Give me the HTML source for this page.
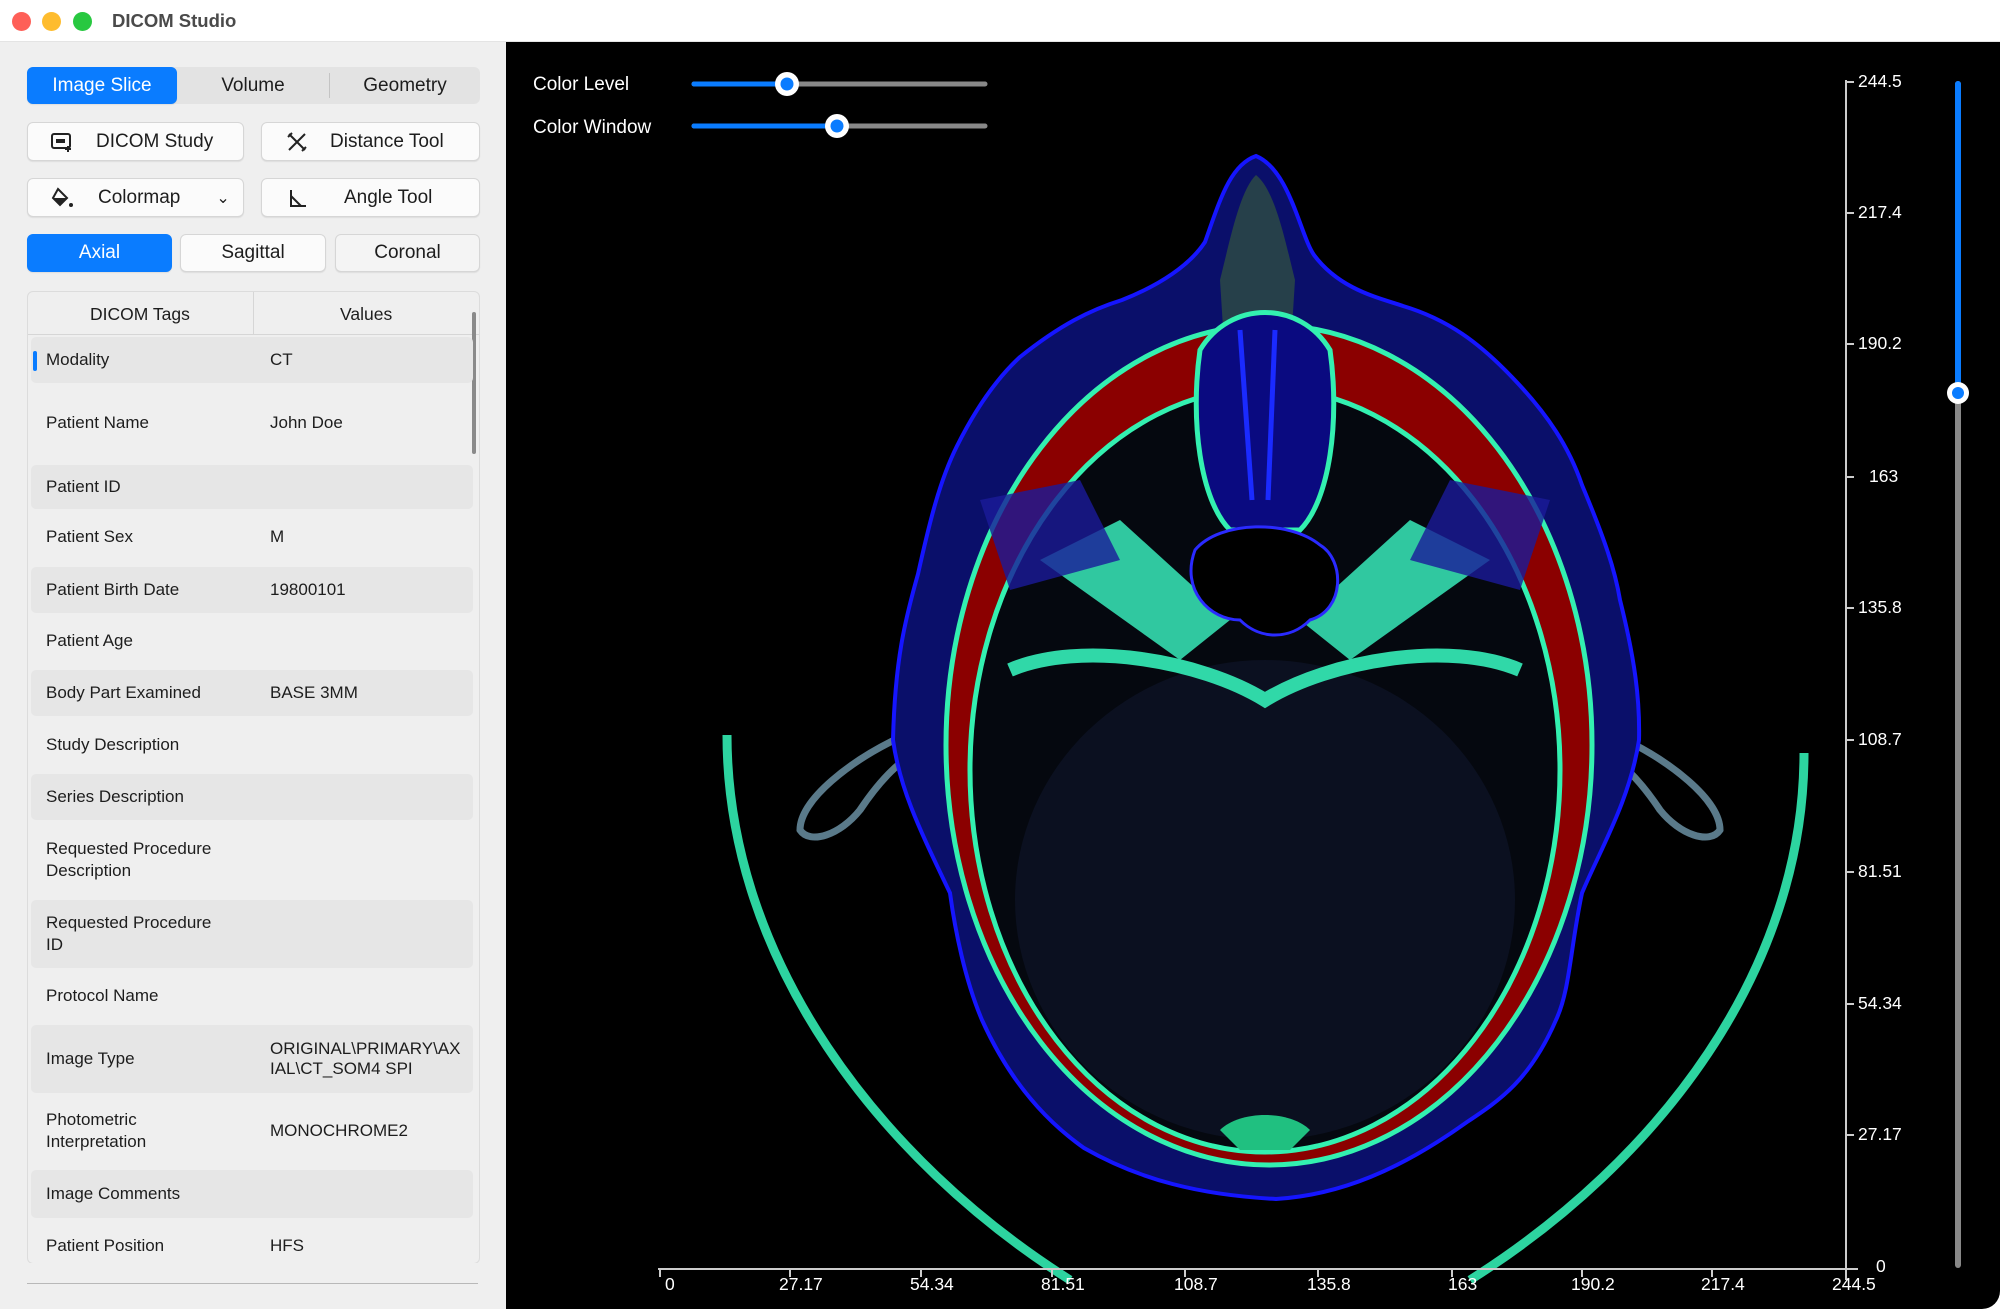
<!DOCTYPE html>
<html><head><meta charset="utf-8"><style>
*{margin:0;padding:0;box-sizing:border-box}
body{width:2000px;height:1309px;background:#fff;font-family:"Liberation Sans",sans-serif;position:relative;overflow:hidden;color:#1d1d1d}
.a{position:absolute}
.tb{left:0;top:0;width:2000px;height:42px;background:#fff;border-bottom:1px solid #e4e4e4}
.dot{width:19px;height:19px;border-radius:50%;top:12px}
.left{left:0;top:42px;width:506px;height:1267px;background:#efefef}
.btn{background:#fbfbfb;border:1px solid #d6d6d6;border-radius:6px;font-size:19px;display:flex;align-items:center;justify-content:center;box-shadow:0 1px 1px rgba(0,0,0,.08)}
.blue{background:#0a7cff;color:#fff;border-color:#0a7cff}
.row{left:31px;width:442px;font-size:17px;}
.row .k{position:absolute;left:15px;top:50%;transform:translateY(-50%);line-height:22px}
.row .v{position:absolute;left:239px;top:50%;transform:translateY(-50%);line-height:20px}
.st{background:#e6e6e6;border-radius:5px}
.black{left:506px;top:42px;width:1494px;height:1267px;background:#000;border-bottom-right-radius:18px}
.lab{color:#fff;font-size:19px}
.tk{color:#fff;font-size:17.5px;position:absolute}
</style></head><body>
<div class="a tb"></div>
<div class="a dot" style="left:12px;background:#fe5f57"></div>
<div class="a dot" style="left:42px;background:#febc2e"></div>
<div class="a dot" style="left:73px;background:#28c840"></div>
<div class="a" style="left:112px;top:10px;font-size:18.5px;font-weight:bold;color:#4a4a4a">DICOM Studio</div>

<div class="a left"></div>
<div class="a" style="left:27px;top:67px;width:453px;height:37px;background:#e3e3e3;border-radius:6px"></div>
<div class="a btn blue" style="left:27px;top:67px;width:150px;height:37px">Image Slice</div>
<div class="a" style="left:177px;top:67px;width:152px;height:37px;font-size:19px;display:flex;align-items:center;justify-content:center">Volume</div>
<div class="a" style="left:329px;top:73px;width:1px;height:25px;background:#c4c4c4"></div>
<div class="a" style="left:330px;top:67px;width:150px;height:37px;font-size:19px;display:flex;align-items:center;justify-content:center">Geometry</div>

<div class="a btn" style="left:27px;top:122px;width:217px;height:39px;justify-content:flex-start">
<svg style="margin-left:22px" width="24" height="20" viewBox="0 0 24 20"><rect x="2" y="2" width="18" height="14" rx="2" fill="none" stroke="#222" stroke-width="2"/><rect x="6" y="7" width="9" height="4" fill="#222"/><path d="M18 14v6M15 17h6" stroke="#222" stroke-width="2"/></svg><span style="margin-left:22px">DICOM Study</span></div>
<div class="a btn" style="left:261px;top:122px;width:219px;height:39px;justify-content:flex-start">
<svg style="margin-left:24px" width="22" height="22" viewBox="0 0 22 22"><path d="M3 3l16 16M19 3L3 19M6 2l-4 4M20 16l-4 4" stroke="#222" stroke-width="2" fill="none"/></svg><span style="margin-left:22px">Distance Tool</span></div>
<div class="a btn" style="left:27px;top:178px;width:217px;height:39px;justify-content:flex-start">
<svg style="margin-left:22px" width="24" height="22" viewBox="0 0 24 22"><path d="M8 2l9 9-7 7-7-7z" fill="none" stroke="#222" stroke-width="2"/><path d="M3 11h14l-7 7z" fill="#222"/><circle cx="21" cy="18" r="2" fill="#222"/></svg><span style="margin-left:24px">Colormap</span><span style="margin-left:36px;font-size:16px">&#8964;</span></div>
<div class="a btn" style="left:261px;top:178px;width:219px;height:39px;justify-content:flex-start">
<svg style="margin-left:26px" width="20" height="20" viewBox="0 0 20 20"><path d="M3 2v16h15M3 8l10 10" stroke="#222" stroke-width="2" fill="none"/></svg><span style="margin-left:36px">Angle Tool</span></div>
<div class="a btn blue" style="left:27px;top:234px;width:145px;height:38px">Axial</div>
<div class="a btn" style="left:180px;top:234px;width:146px;height:38px">Sagittal</div>
<div class="a btn" style="left:335px;top:234px;width:145px;height:38px;background:#f4f4f4">Coronal</div>

<div class="a" style="left:27px;top:291px;width:453px;height:973px;border:1px solid #dcdcdc;border-radius:6px;background:#efefef;overflow:hidden">
<div class="a" style="left:0;top:0;width:453px;height:43px;border-bottom:1px solid #d6d6d6;font-size:17.5px">
<span class="a" style="left:62px;top:12px">DICOM Tags</span><span class="a" style="left:225px;top:0;width:1px;height:43px;background:#d6d6d6"></span><span class="a" style="left:312px;top:12px">Values</span></div>
<div class="a" style="left:444px;top:20px;width:4px;height:142px;background:#8a8a8a;border-radius:2px"></div>
</div>
<div class="a row st" style="top:337px;height:46px"><span class="a" style="left:2px;top:14px;width:4px;height:20px;background:#0a7cff;border-radius:2px"></span><span class="k">Modality</span><span class="v">CT</span></div>
<div class="a row" style="top:383px;height:79px"><span class="k">Patient Name</span><span class="v">John Doe</span></div>
<div class="a row st" style="top:465px;height:44px"><span class="k">Patient ID</span></div>
<div class="a row" style="top:509px;height:56px"><span class="k">Patient Sex</span><span class="v">M</span></div>
<div class="a row st" style="top:567px;height:46px"><span class="k">Patient Birth Date</span><span class="v">19800101</span></div>
<div class="a row" style="top:614px;height:54px"><span class="k">Patient Age</span></div>
<div class="a row st" style="top:670px;height:46px"><span class="k">Body Part Examined</span><span class="v">BASE 3MM</span></div>
<div class="a row" style="top:717px;height:55px"><span class="k">Study Description</span></div>
<div class="a row st" style="top:774px;height:46px"><span class="k">Series Description</span></div>
<div class="a row" style="top:821px;height:77px"><span class="k">Requested Procedure<br>Description</span></div>
<div class="a row st" style="top:900px;height:68px"><span class="k">Requested Procedure<br>ID</span></div>
<div class="a row" style="top:969px;height:54px"><span class="k">Protocol Name</span></div>
<div class="a row st" style="top:1025px;height:68px"><span class="k">Image Type</span><span class="v">ORIGINAL\PRIMARY\AX<br>IAL\CT_SOM4 SPI</span></div>
<div class="a row" style="top:1094px;height:74px"><span class="k">Photometric<br>Interpretation</span><span class="v">MONOCHROME2</span></div>
<div class="a row st" style="top:1170px;height:48px"><span class="k">Image Comments</span></div>
<div class="a row" style="top:1219px;height:54px"><span class="k">Patient Position</span><span class="v">HFS</span></div>
<div class="a" style="left:27px;top:1263px;width:453px;height:2px;background:#efefef"></div>
<div class="a" style="left:27px;top:1283px;width:451px;height:1px;background:#b8b8b8"></div>

<div class="a black"></div>
<svg class="a" style="left:0;top:0" width="2000" height="1309" viewBox="0 0 2000 1309">
<defs><clipPath id="c"><rect x="506" y="42" width="1494" height="1267"/></clipPath></defs>
<g clip-path="url(#c)">
<path d="M727 735 C727 960 880 1160 1070 1280" fill="none" stroke="#2dd4a0" stroke-width="9"/>
<path d="M1804 753 C1804 970 1660 1160 1470 1280" fill="none" stroke="#2dd4a0" stroke-width="9"/>
<path d="M905 735 C850 760 800 800 800 830 C810 845 840 835 860 810 C880 780 900 760 920 750" fill="none" stroke="#5a7a8a" stroke-width="7"/>
<path d="M1615 735 C1670 760 1720 800 1720 830 C1710 845 1680 835 1660 810 C1640 780 1620 760 1600 750" fill="none" stroke="#5a7a8a" stroke-width="7"/>
<path d="M1256 156 C1290 170 1300 235 1314 255 C1340 290 1380 298 1403 306 C1450 320 1480 345 1505 370 C1550 415 1570 450 1582 485 C1605 540 1615 570 1620 600 C1635 660 1640 700 1639 740 C1630 800 1600 850 1582 893 C1570 950 1570 990 1556 1020 C1530 1080 1500 1100 1467 1122 C1400 1170 1340 1195 1276 1199 C1200 1195 1140 1180 1084 1148 C1030 1110 1000 1060 982 1020 C965 980 955 930 950 893 C920 830 900 790 893 740 C895 660 905 620 918 574 C930 520 940 480 957 446 C975 410 995 380 1020 357 C1060 325 1090 310 1122 300 C1160 285 1190 265 1205 242 C1220 200 1230 165 1256 156Z" fill="#0a0f6a" stroke="#1515ff" stroke-width="4"/>
<path d="M1256 175 C1275 190 1285 240 1295 280 L1290 360 L1225 360 L1220 280 C1230 240 1240 190 1256 175Z" fill="#26404a"/>
<ellipse cx="1269" cy="745" rx="323" ry="420" fill="#8b0000" stroke="#33f0b0" stroke-width="5"/>
<ellipse cx="1265" cy="770" rx="295" ry="382" fill="#05080f" stroke="#33f0b0" stroke-width="5"/>
<ellipse cx="1265" cy="900" rx="250" ry="240" fill="#0b1020"/>
<path d="M1040 560 L1120 520 L1230 620 L1180 660 Z" fill="#30c8a0"/>
<path d="M1490 560 L1410 520 L1300 620 L1350 660 Z" fill="#30c8a0"/>
<path d="M1010 670 C1080 640 1200 660 1265 700 C1330 660 1450 640 1520 670" fill="none" stroke="#30d8a8" stroke-width="14"/>
<path d="M980 500 L1080 480 L1120 560 L1010 590Z" fill="#1a1a9a" opacity=".8"/>
<path d="M1550 500 L1450 480 L1410 560 L1520 590Z" fill="#1a1a9a" opacity=".8"/>
<path d="M1200 350 C1190 420 1200 500 1230 530 L1300 530 C1330 500 1340 420 1330 350 C1300 300 1230 300 1200 350Z" fill="#0a0a80" stroke="#33f0b0" stroke-width="5"/>
<path d="M1240 330 L1252 500 M1275 330 L1268 500" stroke="#1a2aff" stroke-width="5"/>
<path d="M1195 550 C1180 590 1210 620 1240 620 C1260 640 1290 640 1310 620 C1345 610 1345 560 1320 545 C1290 520 1220 520 1195 550Z" fill="#000" stroke="#2a2aff" stroke-width="3"/>
<path d="M1220 1130 C1240 1110 1290 1110 1310 1130 L1290 1150 L1240 1150Z" fill="#20c080"/>
</g>
<line x1="658" y1="1269" x2="1858" y2="1269" stroke="#ccc" stroke-width="2"/>
<line x1="1846" y1="80" x2="1846" y2="1280" stroke="#ccc" stroke-width="2"/>
<g stroke="#ccc" stroke-width="2">
<line x1="660" y1="1269" x2="660" y2="1277"/><line x1="790" y1="1269" x2="790" y2="1277"/><line x1="921" y1="1269" x2="921" y2="1277"/><line x1="1052" y1="1269" x2="1052" y2="1277"/><line x1="1185" y1="1269" x2="1185" y2="1277"/><line x1="1318" y1="1269" x2="1318" y2="1277"/><line x1="1452" y1="1269" x2="1452" y2="1277"/><line x1="1582" y1="1269" x2="1582" y2="1277"/><line x1="1712" y1="1269" x2="1712" y2="1277"/>
<line x1="1846" y1="82" x2="1854" y2="82"/><line x1="1846" y1="213" x2="1854" y2="213"/><line x1="1846" y1="344" x2="1854" y2="344"/><line x1="1846" y1="477" x2="1854" y2="477"/><line x1="1846" y1="608" x2="1854" y2="608"/><line x1="1846" y1="740" x2="1854" y2="740"/><line x1="1846" y1="872" x2="1854" y2="872"/><line x1="1846" y1="1004" x2="1854" y2="1004"/><line x1="1846" y1="1135" x2="1854" y2="1135"/>
</g>
<line x1="1958" y1="84" x2="1958" y2="1265" stroke="#888" stroke-width="6" stroke-linecap="round"/>
<line x1="1958" y1="84" x2="1958" y2="393" stroke="#0a7cff" stroke-width="6" stroke-linecap="round"/>
<circle cx="1958" cy="393" r="11" fill="#fff"/><circle cx="1958" cy="393" r="6" fill="#0a7cff"/>
<line x1="694" y1="84" x2="985" y2="84" stroke="#888" stroke-width="5" stroke-linecap="round"/>
<line x1="694" y1="84" x2="787" y2="84" stroke="#0a7cff" stroke-width="5" stroke-linecap="round"/>
<circle cx="787" cy="84" r="12" fill="#fff"/><circle cx="787" cy="84" r="6.5" fill="#0a7cff"/>
<line x1="694" y1="126" x2="985" y2="126" stroke="#888" stroke-width="5" stroke-linecap="round"/>
<line x1="694" y1="126" x2="837" y2="126" stroke="#0a7cff" stroke-width="5" stroke-linecap="round"/>
<circle cx="837" cy="126" r="12" fill="#fff"/><circle cx="837" cy="126" r="6.5" fill="#0a7cff"/>
</svg>
<div class="a lab" style="left:533px;top:74px">Color Level</div>
<div class="a lab" style="left:533px;top:117px">Color Window</div>
<div class="tk" style="left:665px;top:1274px">0</div>
<div class="tk" style="left:779px;top:1274px">27.17</div>
<div class="tk" style="left:910px;top:1274px">54.34</div>
<div class="tk" style="left:1041px;top:1274px">81.51</div>
<div class="tk" style="left:1174px;top:1274px">108.7</div>
<div class="tk" style="left:1307px;top:1274px">135.8</div>
<div class="tk" style="left:1448px;top:1274px">163</div>
<div class="tk" style="left:1571px;top:1274px">190.2</div>
<div class="tk" style="left:1701px;top:1274px">217.4</div>
<div class="tk" style="left:1832px;top:1274px">244.5</div>
<div class="tk" style="left:1858px;top:71px">244.5</div>
<div class="tk" style="left:1858px;top:202px">217.4</div>
<div class="tk" style="left:1858px;top:333px">190.2</div>
<div class="tk" style="left:1869px;top:466px">163</div>
<div class="tk" style="left:1858px;top:597px">135.8</div>
<div class="tk" style="left:1858px;top:729px">108.7</div>
<div class="tk" style="left:1858px;top:861px">81.51</div>
<div class="tk" style="left:1858px;top:993px">54.34</div>
<div class="tk" style="left:1858px;top:1124px">27.17</div>
<div class="tk" style="left:1876px;top:1256px">0</div>
</body></html>
